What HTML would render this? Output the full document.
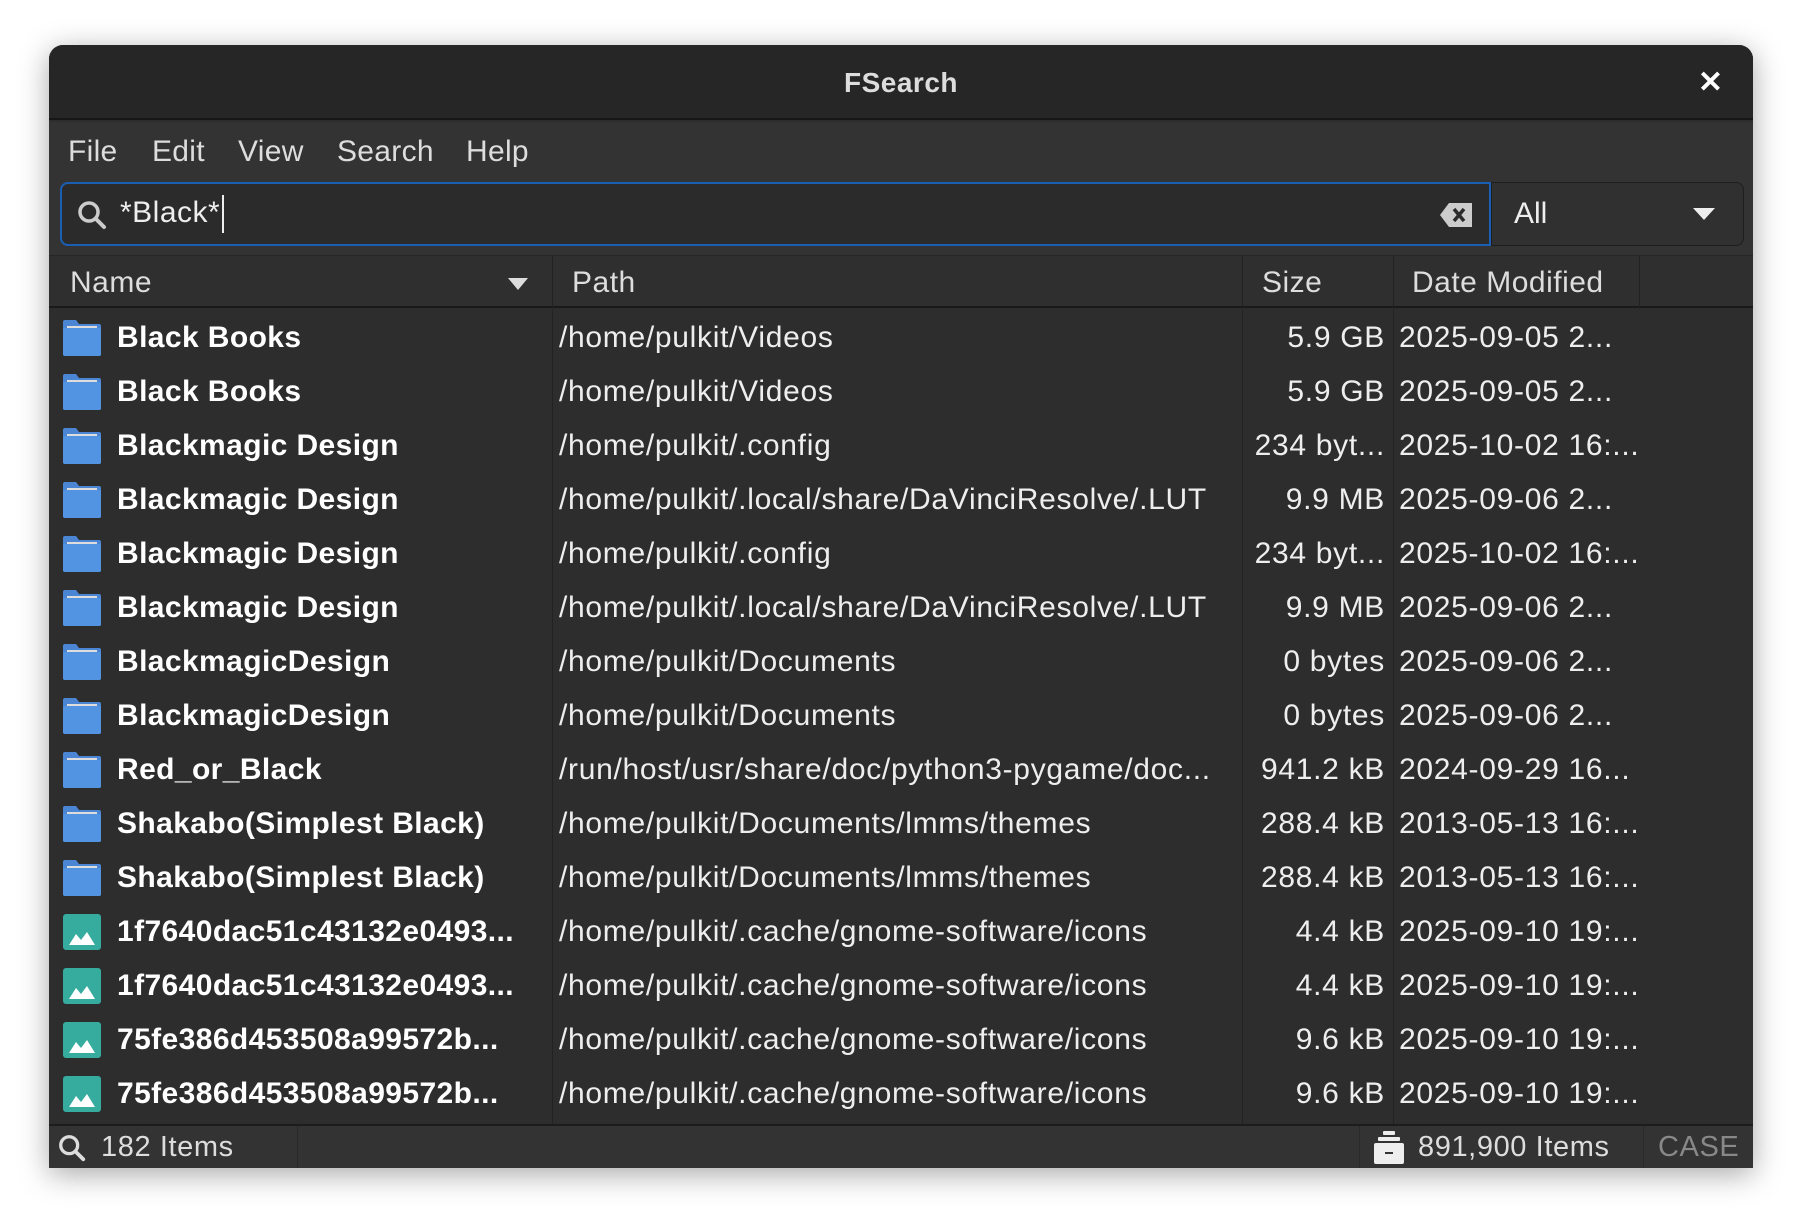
<!DOCTYPE html>
<html><head><meta charset="utf-8"><style>
*{margin:0;padding:0;box-sizing:border-box}
body{width:1804px;height:1224px;background:#fff;position:relative;overflow:hidden;font-family:"Liberation Sans",sans-serif;color:#eee}
span{white-space:nowrap}
.win{position:absolute;left:49px;top:45px;width:1704px;height:1123px;background:#2d2d2d;border-radius:14px 14px 0 0;overflow:hidden;box-shadow:0 6px 30px rgba(0,0,0,.35)}
.tb{position:absolute;left:0;top:0;width:100%;height:75px;background:#262626;border-bottom:2px solid #161616}
.title{position:absolute;width:100%;top:22px;text-align:center;font-weight:bold;font-size:28px;color:#ddd;letter-spacing:0.5px}
.close{position:absolute;right:30px;top:20px;font-size:30px;font-weight:bold;color:#fff}
.menu{position:absolute;top:77px;left:0;width:100%;height:60px;background:#333}
.menu span{position:absolute;top:13px;font-size:30px;color:#ddd;letter-spacing:0.3px}
.tool{position:absolute;top:128px;left:0;width:100%;height:82px;background:#333}
.entry{position:absolute;left:11px;top:9px;width:1431px;height:64px;border:2px solid #1a5fb4;border-radius:8px 0 0 8px;background:#2b2b2b}
.drop{position:absolute;left:1442px;top:9px;width:253px;height:64px;border:1px solid #1e1e1e;border-radius:0 8px 8px 0;background:#303030}
.hdr{position:absolute;top:210px;left:0;width:100%;height:53px;background:#2f2f2f;border-bottom:2px solid #1a1a1a;border-top:1px solid #262626}
.hdr span{position:absolute;top:10px;font-size:30px;color:#ddd;letter-spacing:0.5px}
.vl{position:absolute;top:0;width:1px;background:#222}
.row{position:absolute;left:0;width:1590px;height:54px;font-size:30px;color:#eee;letter-spacing:0.7px;white-space:nowrap}
.row .n{position:absolute;left:68px;top:10px;font-weight:bold;color:#fff;letter-spacing:0.4px}
.row .p{position:absolute;left:510px;top:10px}
.row .s{position:absolute;right:254px;top:10px}
.row .d{position:absolute;left:1350px;top:10px}
.row svg{position:absolute;left:12px;top:8px}
.status{position:absolute;left:0;top:1079px;width:100%;height:44px;background:#333;border-top:2px solid #1c1c1c;font-size:29px;color:#ddd;letter-spacing:0.6px}
</style></head><body>
<div class="win">
<div class="tb"><div class="title">FSearch</div><div class="close">✕</div></div>
<div class="menu"><span style="left:19px">File</span><span style="left:103px">Edit</span><span style="left:189px">View</span><span style="left:288px">Search</span><span style="left:417px">Help</span></div>
<div class="tool">
<div class="entry">
<svg style="position:absolute;left:14px;top:15px" width="32" height="32" viewBox="0 0 32 32"><circle cx="13" cy="13" r="9" fill="none" stroke="#ccc" stroke-width="3.5"/><path d="M19.5 19.5L28 28" stroke="#ccc" stroke-width="4" stroke-linecap="round"/></svg>
<span style="position:absolute;left:58px;top:12px;font-size:30px;color:#eee;letter-spacing:0.5px">*Black*</span><span style="position:absolute;left:160px;top:11px;width:2px;height:38px;background:#eee"></span>
<svg style="position:absolute;right:16px;top:18px" width="34" height="26" viewBox="0 0 34 26"><path d="M10 1H33V25H10L1 13Z" fill="#ccc"/><path d="M15 7L25 19M25 7L15 19" stroke="#2b2b2b" stroke-width="3.5"/></svg>
</div>
<div class="drop"><span style="position:absolute;left:22px;top:14px;font-size:30px;color:#eee">All</span>
<svg style="position:absolute;right:28px;top:25px" width="22" height="12"><path d="M0 0H22L11 12Z" fill="#eee"/></svg></div>
</div>
<div class="hdr">
<span style="left:21px">Name</span>
<svg style="position:absolute;left:459px;top:22px" width="20" height="12"><path d="M0 0H20L10 12Z" fill="#ddd"/></svg>
<div class="vl" style="left:503px;height:53px"></div>
<span style="left:523px">Path</span>
<div class="vl" style="left:1193px;height:53px"></div>
<span style="left:1213px">Size</span>
<div class="vl" style="left:1344px;height:53px"></div>
<span style="left:1363px">Date Modified</span>
<div class="vl" style="left:1590px;height:53px"></div>
</div>
<div class="vl" style="left:503px;top:265px;height:814px"></div>
<div class="vl" style="left:1193px;top:265px;height:814px"></div>
<div class="vl" style="left:1344px;top:265px;height:814px"></div>
<div id="rows"></div>
<div class="status">
<svg style="position:absolute;left:8px;top:7px" width="30" height="30" viewBox="0 0 32 32"><circle cx="13" cy="13" r="9" fill="none" stroke="#ddd" stroke-width="3.5"/><path d="M19.5 19.5L28 28" stroke="#ddd" stroke-width="4" stroke-linecap="round"/></svg>
<span style="position:absolute;left:52px;top:5px">182 Items</span>
<div class="vl" style="left:248px;height:44px;background:#2a2a2a"></div>
<div class="vl" style="left:1310px;height:44px;background:#2a2a2a"></div>
<svg style="position:absolute;left:1324px;top:5px" width="32" height="34" viewBox="0 0 32 34"><rect x="10" y="0" width="12" height="4" rx="1" fill="#eee"/><rect x="5" y="6" width="22" height="4" rx="1" fill="#eee"/><rect x="1" y="12" width="30" height="21" rx="2" fill="#eee"/><rect x="12" y="21" width="8" height="2" fill="#333"/></svg>
<span style="position:absolute;left:1369px;top:5px">891,900 Items</span>
<div class="vl" style="left:1594px;height:44px;background:#2a2a2a"></div>
<span style="position:absolute;left:1609px;top:5px;color:#888">CASE</span>
</div>
</div>
<script>
var F='<svg width="42" height="38" viewBox="0 0 42 38"><path d="M2 3Q2 1 4 1H15L18 5H38Q40 5 40 7V35Q40 37 38 37H4Q2 37 2 35Z" fill="#4a86d4"/><rect x="2" y="9" width="38" height="28" rx="2" fill="#5294e2"/><rect x="6" y="7" width="30" height="2" fill="#ddd"/></svg>';
var I='<svg width="42" height="38" viewBox="0 0 42 38"><rect x="2" y="1" width="38" height="36" rx="3" fill="#36ac9e"/><path d="M8 32L15 21L20 27L26 19L34 32Z" fill="#fff"/></svg>';
var d=[
[F,"Black Books","/home/pulkit/Videos","5.9 GB","2025-09-05 2..."],
[F,"Black Books","/home/pulkit/Videos","5.9 GB","2025-09-05 2..."],
[F,"Blackmagic Design","/home/pulkit/.config","234 byt...","2025-10-02 16:..."],
[F,"Blackmagic Design","/home/pulkit/.local/share/DaVinciResolve/.LUT","9.9 MB","2025-09-06 2..."],
[F,"Blackmagic Design","/home/pulkit/.config","234 byt...","2025-10-02 16:..."],
[F,"Blackmagic Design","/home/pulkit/.local/share/DaVinciResolve/.LUT","9.9 MB","2025-09-06 2..."],
[F,"BlackmagicDesign","/home/pulkit/Documents","0 bytes","2025-09-06 2..."],
[F,"BlackmagicDesign","/home/pulkit/Documents","0 bytes","2025-09-06 2..."],
[F,"Red_or_Black","/run/host/usr/share/doc/python3-pygame/doc...","941.2 kB","2024-09-29 16..."],
[F,"Shakabo(Simplest Black)","/home/pulkit/Documents/lmms/themes","288.4 kB","2013-05-13 16:..."],
[F,"Shakabo(Simplest Black)","/home/pulkit/Documents/lmms/themes","288.4 kB","2013-05-13 16:..."],
[I,"1f7640dac51c43132e0493...","/home/pulkit/.cache/gnome-software/icons","4.4 kB","2025-09-10 19:..."],
[I,"1f7640dac51c43132e0493...","/home/pulkit/.cache/gnome-software/icons","4.4 kB","2025-09-10 19:..."],
[I,"75fe386d453508a99572b...","/home/pulkit/.cache/gnome-software/icons","9.6 kB","2025-09-10 19:..."],
[I,"75fe386d453508a99572b...","/home/pulkit/.cache/gnome-software/icons","9.6 kB","2025-09-10 19:..."]];
var h='';d.forEach(function(r,i){h+='<div class="row" style="top:'+(266+54*i)+'px">'+r[0]+'<span class="n">'+r[1]+'</span><span class="p">'+r[2]+'</span><span class="s">'+r[3]+'</span><span class="d">'+r[4]+'</span></div>';});
document.getElementById('rows').innerHTML=h;
</script>
</body></html>
